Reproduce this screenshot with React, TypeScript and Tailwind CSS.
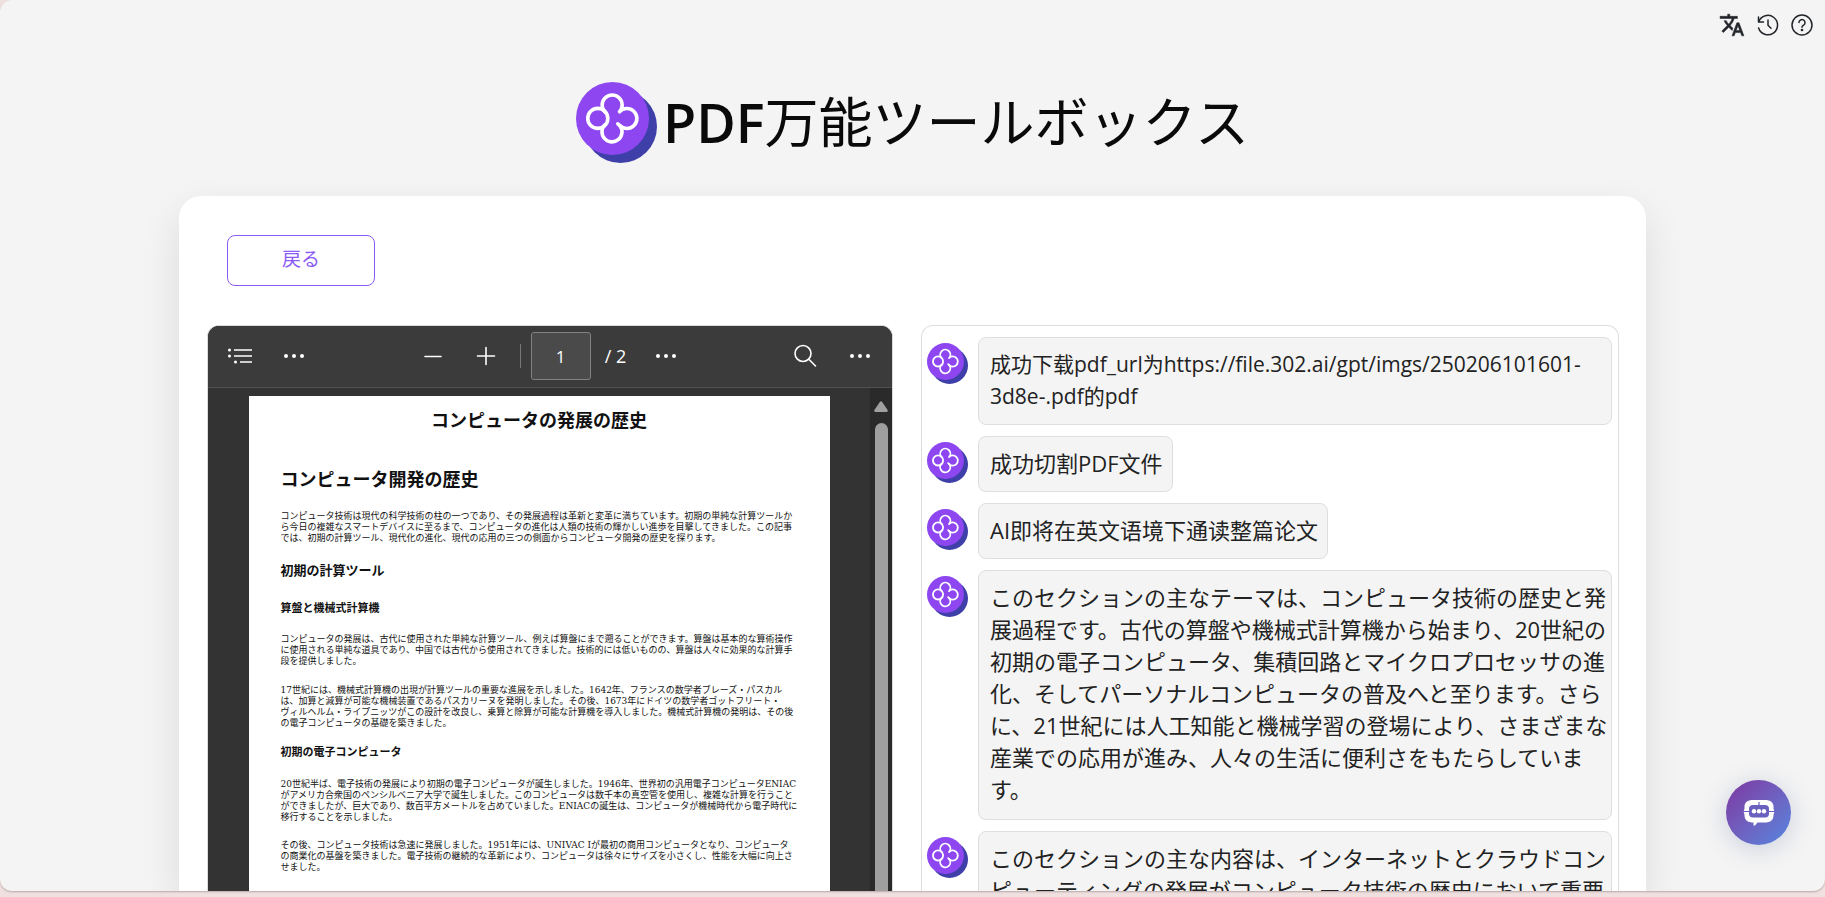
import { useId, useState } from 'react';

const JA_STYLE = "font-['Open_Sans','Noto_Sans_CJK_JP',sans-serif] text-[22px] pb-[14px]";
const ZH_STYLE = "font-['Open_Sans','Noto_Sans_CJK_SC',sans-serif] text-[22px] pb-3 pr-[9px]";
const ZH_LINK_STYLE = "font-['Open_Sans','Noto_Sans_CJK_SC',sans-serif] text-[21px] pb-3 pr-[9px]";

function Logo({ className }: { className: string }) {
  return (
    <svg viewBox="0 0 81 81" className={className} aria-hidden="true">
      <circle cx="44.5" cy="44.5" r="36.5" fill="#3f3faa" />
      <circle cx="36.5" cy="36.5" r="36.5" fill="#8e47f0" />
      <g fill="none" stroke="#fff" strokeWidth="3.6" strokeLinecap="round" strokeLinejoin="round">
        <circle cx="21.8" cy="36.4" r="10" />
        <path d="M29 30A10 10 0 1 1 43.500 29.800A10 10 0 1 1 43.800 43.600L41.800 41.800" />
        <path d="M43.800 43.600A10 10 0 1 1 29 42.700" />
      </g>
    </svg>
  );
}

function TranslateIcon() {
  return (
    <svg viewBox="0 0 24 24" className="size-[26px]" fill="currentColor" stroke="currentColor" strokeWidth=".5" aria-hidden="true">
      <path d="m12.870 15.070-2.540-2.510.030-.030A17.520 17.520 0 0 0 14.070 6H17V4h-7V2H8v2H1v1.990h11.170C11.500 7.920 10.440 9.750 9 11.350 8.070 10.320 7.300 9.190 6.690 8h-2c.730 1.630 1.730 3.170 2.980 4.560l-5.090 5.020L4 19l5-5 3.110 3.110.760-2.040zM18.500 10h-2L12 22h2l1.120-3h4.750L21 22h2l-4.500-12zm-2.620 7 1.620-4.330L19.120 17h-3.240z" />
    </svg>
  );
}

function HistoryIcon() {
  return (
    <svg viewBox="0 0 22 22" className="size-[22px]" fill="none" stroke="currentColor" strokeWidth="1.500" strokeLinecap="round" strokeLinejoin="round" aria-hidden="true">
      <path d="M1.500 3v5h5" />
      <path d="M1.800 7.600A9.700 9.700 0 1 1 1.600 14" />
      <path d="M11 6v5.200l3 3" />
    </svg>
  );
}

function HelpIcon() {
  return (
    <svg viewBox="0 0 22 22" className="size-[22px]" fill="none" stroke="currentColor" strokeWidth="1.500" strokeLinecap="round" strokeLinejoin="round" aria-hidden="true">
      <circle cx="11" cy="11" r="10" />
      <path d="M8 8.600a3 3 0 1 1 4.800 2.400c-1.100.800-1.800 1.200-1.800 2.200" />
      <circle cx="11" cy="16" r=".6" fill="currentColor" />
    </svg>
  );
}

function Dots() {
  return (
    <svg viewBox="0 0 20 20" className="size-5" fill="currentColor" aria-hidden="true">
      <circle cx="2" cy="10" r="2" />
      <circle cx="10" cy="10" r="2" />
      <circle cx="18" cy="10" r="2" />
    </svg>
  );
}

function Stroke({ d, className }: { d: string; className: string }) {
  return (
    <svg viewBox="0 0 24 24" className={className} fill="none" stroke="currentColor" strokeWidth="1.600" strokeLinecap="round" aria-hidden="true">
      <path d={d} />
    </svg>
  );
}

function Toolbar() {
  const id = useId();
  const [page, setPage] = useState('1');
  return (
    <div className="flex h-[62px] shrink-0 items-center justify-between border-b border-[#505050] bg-[#3b3b3b] pr-[22px] pb-px pl-[19px] text-white">
      <div className="flex items-center gap-[31px]">
        <button type="button" aria-label="目次" className="flex">
          <svg viewBox="0 0 26 20" className="h-5 w-[26px]" fill="none" stroke="currentColor" strokeWidth="1.500" aria-hidden="true">
            <path d="M7 4h18M7 10h18M13 16h12" />
            <g fill="currentColor" stroke="none">
              <circle cx="2.500" cy="4" r="1.500" />
              <circle cx="2.500" cy="10" r="1.500" />
              <circle cx="8.500" cy="16" r="1.500" />
            </g>
          </svg>
        </button>
        <button type="button" aria-label="その他のツール" className="flex"><Dots /></button>
      </div>
      <div className="flex items-center">
        <button type="button" aria-label="縮小" className="flex"><Stroke d="M4 12.500h16" className="size-6" /></button>
        <button type="button" aria-label="拡大" className="ml-[29px] flex"><Stroke d="M3.500 12h17M12 3.500v17" className="size-6" /></button>
        <span className="ml-[22px] h-6 w-px bg-[#777]" />
        <label htmlFor={id} className="sr-only">ページ</label>
        <input
          id={id}
          value={page}
          onChange={(e) => setPage(e.target.value)}
          className="ml-[10px] h-12 w-[60px] rounded-[3px] border border-[#828282] bg-[#4a4a4a] text-center text-[17px] text-white outline-none"
        />
        <span className="ml-[14px] text-[18px]">/ 2</span>
        <button type="button" aria-label="表示オプション" className="ml-[30px] flex"><Dots /></button>
      </div>
      <div className="flex items-center gap-[33px]">
        <button type="button" aria-label="検索" className="flex">
          <Stroke d="M18 9.500a8 8 0 1 1-16 0a8 8 0 1 1 16 0M15.800 15.300L22.500 22" className="size-6" />
        </button>
        <button type="button" aria-label="設定など" className="flex"><Dots /></button>
      </div>
    </div>
  );
}

function Document() {
  return (
    <article className="mx-auto mt-2 w-[581px] max-w-full bg-white px-8 font-['DejaVu_Serif','Noto_Sans_CJK_JP',serif] text-[9px] leading-[11px] text-[#111]">
      <h2 className="pt-3 text-center text-[18px] leading-[26px] font-bold">コンピュータの発展の歴史</h2>
      <h3 className="mt-[33px] text-[18px] leading-[26px] font-bold">コンピュータ開発の歴史</h3>
      <p className="mt-[18px]">
        コンピュータ技術は現代の科学技術の柱の一つであり、その発展過程は革新と変革に満ちています。初期の単純な計算ツールから今日の複雑なスマートデバイスに至るまで、コンピュータの進化は人類の技術の輝かしい進歩を目撃してきました。この記事では、初期の計算ツール、現代化の進化、現代の応用の三つの側面からコンピュータ開発の歴史を探ります。
      </p>
      <h4 className="mt-[17px] text-[13px] leading-[20px] font-bold">初期の計算ツール</h4>
      <h5 className="mt-5 text-[11px] leading-4 font-bold">算盤と機械式計算機</h5>
      <p className="mt-[17px]">
        コンピュータの発展は、古代に使用された単純な計算ツール、例えば算盤にまで遡ることができます。算盤は基本的な算術操作に使用される単純な道具であり、中国では古代から使用されてきました。技術的には低いものの、算盤は人々に効果的な計算手段を提供しました。
      </p>
      <p className="mt-[18px]">
        17世紀には、機械式計算機の出現が計算ツールの重要な進展を示しました。1642年、フランスの数学者ブレーズ・パスカルは、加算と減算が可能な機械装置であるパスカリーヌを発明しました。その後、1673年にドイツの数学者ゴットフリート・<br />
        ヴィルヘルム・ライプニッツがこの設計を改良し、乗算と除算が可能な計算機を導入しました。機械式計算機の発明は、その後の電子コンピュータの基礎を築きました。
      </p>
      <h5 className="mt-4 text-[11px] leading-4 font-bold">初期の電子コンピュータ</h5>
      <p className="mt-[18px]">
        20世紀半ば、電子技術の発展により初期の電子コンピュータが誕生しました。1946年、世界初の汎用電子コンピュータENIACがアメリカ合衆国のペンシルベニア大学で誕生しました。このコンピュータは数千本の真空管を使用し、複雑な計算を行うことができましたが、巨大であり、数百平方メートルを占めていました。ENIACの誕生は、コンピュータが機械時代から電子時代に移行することを示しました。
      </p>
      <p className="mt-[17px] pb-10">
        その後、コンピュータ技術は急速に発展しました。1951年には、UNIVAC Iが最初の商用コンピュータとなり、コンピュータ<br />
        の商業化の基盤を築きました。電子技術の継続的な革新により、コンピュータは徐々にサイズを小さくし、性能を大幅に向上させました。
      </p>
    </article>
  );
}

function Viewer() {
  return (
    <section className="flex min-w-0 flex-col overflow-hidden rounded-t-xl border border-b-0 border-[#d8dcdc] bg-[#333]">
      <Toolbar />
      <div className="flex min-h-0 flex-1">
        <div className="min-w-0 flex-1 overflow-hidden"><Document /></div>
        <div className="flex w-[22px] flex-col items-center bg-[#2a2a2a]">
          <svg viewBox="0 0 14 11" className="mt-[13px] h-[11px] w-[14px]" fill="#a0a0a0" aria-hidden="true">
            <path d="M6 .8Q7 -.4 8 .8L13.600 9Q14.200 11 12.500 11H1.500Q-.2 11 .4 9Z" />
          </svg>
          <div className="mt-[11px] w-[13px] flex-1 rounded-t-full bg-[#9f9f9f]" />
        </div>
      </div>
    </section>
  );
}

interface Message {
  text: string;
  style: string;
}

const messages: Message[] = [
  { text: '成功下载pdf_url为https://file.302.ai/gpt/imgs/250206101601-3d8e-.pdf的pdf', style: ZH_LINK_STYLE },
  { text: '成功切割PDF文件', style: ZH_STYLE },
  { text: 'AI即将在英文语境下通读整篇论文', style: ZH_STYLE },
  {
    text: 'このセクションの主なテーマは、コンピュータ技術の歴史と発展過程です。古代の算盤や機械式計算機から始まり、20世紀の初期の電子コンピュータ、集積回路とマイクロプロセッサの進化、そしてパーソナルコンピュータの普及へと至ります。さらに、21世紀には人工知能と機械学習の登場により、さまざまな産業での応用が進み、人々の生活に便利さをもたらしています。',
    style: JA_STYLE,
  },
  {
    text: 'このセクションの主な内容は、インターネットとクラウドコンピューティングの発展がコンピュータ技術の歴史において重要な役割を果たしたことです。',
    style: JA_STYLE,
  },
];

function Messages() {
  return (
    <section className="min-w-0 overflow-hidden rounded-t-xl border border-b-0 border-[#dedede] bg-white pt-[11px] pr-[6px] pl-[5px]">
      <ul className="flex flex-col gap-[11px]">
        {messages.map((m) => (
          <li key={m.text} className="flex items-start gap-[10px]">
            <Logo className="mt-[6px] size-[41px] shrink-0" />
            <p className={`min-w-0 rounded-lg border border-[#dedede] bg-[#f4f4f4] pt-[10px] pl-[11px] leading-8 text-[#222] ${m.style}`}>
              {m.text}
            </p>
          </li>
        ))}
      </ul>
    </section>
  );
}

export default function App() {
  return (
    <div className="flex h-screen flex-col bg-[#f0e0e0] pb-[6px] font-['Open_Sans','Noto_Sans_CJK_JP',sans-serif]">
      <div className="relative flex min-h-0 flex-1 flex-col overflow-hidden rounded-tl-xl rounded-b-xl bg-[#f4f4f4] shadow-[0_1px_2px_#b8a8a8]">
        <nav className="absolute top-3 right-3 flex items-center gap-3 text-[#22262a]">
          <button type="button" aria-label="言語" className="flex"><TranslateIcon /></button>
          <button type="button" aria-label="履歴" className="flex"><HistoryIcon /></button>
          <button type="button" aria-label="ヘルプ" className="flex"><HelpIcon /></button>
        </nav>
        <header className="flex items-center justify-center gap-[6px] pt-[82px] text-[#0a0a0a]">
          <Logo className="size-[81px]" />
          <h1 className="pb-[2px] text-[54px] leading-[78px] font-normal"><span className="font-semibold">PDF</span>万能ツールボックス</h1>
        </header>
        <main className="mx-auto mt-[33px] flex min-h-0 w-full max-w-[1467px] flex-1 flex-col rounded-t-[22px] bg-white pt-[39px] pr-[27px] pl-7 shadow-[0_16px_40px_rgba(0,0,0,0.10)]">
          <div className="pl-5">
            <button type="button" className="h-[51px] w-[148px] rounded-lg border border-[#8b5cf6] bg-white pb-[2px] text-[19px] text-[#8b5cf6]">戻る</button>
          </div>
          <div className="mt-[39px] grid min-h-0 flex-1 grid-cols-[686fr_698fr] gap-7">
            <Viewer />
            <Messages />
          </div>
        </main>
        <button
          type="button"
          aria-label="チャット"
          className="absolute right-[34px] bottom-[46px] flex size-[65px] items-center justify-center rounded-full bg-linear-to-br from-[#7b35a0] to-[#4f86e0] shadow-[0_4px_24px_rgba(80,100,160,0.25)]"
        >
          <svg viewBox="0 0 32 27" className="h-[27px] w-8" aria-hidden="true">
            <path d="M10 1H22C27 1 30 3 30.500 7V9.500Q32 12.500 30.500 15.500V17C30 21.500 27 23.500 22 23.500H14.500L12 26.500H10.500V23.500C5 23.500 2 21.500 1.500 17V15.500Q0 12.500 1.500 9.500V7C2 3 5 1 10 1Z" fill="#fff" />
            <rect x="6" y="6" width="20" height="12.500" rx="4" fill="#6a60bd" />
            <path d="M0 12.500H6M26 12.500H32M16 3V6" stroke="#6a60bd" strokeWidth="1.200" />
            <g fill="#fff">
              <circle cx="11" cy="12.300" r="2.200" />
              <circle cx="16" cy="12.300" r="2.200" />
              <circle cx="21" cy="12.300" r="2.200" />
            </g>
          </svg>
        </button>
      </div>
    </div>
  );
}
